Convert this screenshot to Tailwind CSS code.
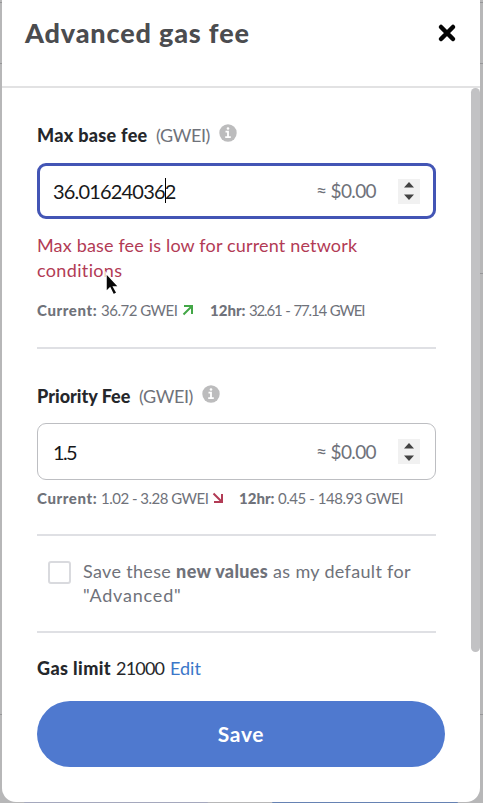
<!DOCTYPE html>
<html lang="en">
<head>
<meta charset="utf-8">
<title>Advanced gas fee</title>
<script src="https://cdn.jsdelivr.net/npm/@tailwindcss/browser@4"></script>
</head>
<body class="relative h-[803px] w-[483px] overflow-hidden bg-[#b7b7b8] font-['Lato',sans-serif] whitespace-nowrap text-[#6f727a]">
<div class="absolute inset-0">
  <div class="absolute top-[2px] h-px w-full bg-[#969698]"></div>
  <div class="absolute top-[63px] h-px w-full bg-[#969698]"></div>
  <div class="absolute top-[273px] left-[480px] h-px w-[3px] bg-[#969698]"></div>
  <div class="absolute top-[714px] h-px w-full bg-[#969698]"></div>
  <div class="absolute top-[801px] left-[24px] h-[2px] w-[184px] rounded bg-[#a5a8bd]"></div>
  <div class="absolute top-[801px] left-[272px] h-[2px] w-[186px] rounded bg-[#6682b3]"></div>
</div>
<main class="relative ml-[2px] flex h-[802px] w-[478px] flex-col rounded-b-[14px] bg-white">
  <header class="flex h-[88px] shrink-0 items-start justify-between border-b-2 border-[#e2e2e3] pr-[23px] pl-[23px]">
    <h1 class="mt-[16px] text-[27px] leading-[34px] font-black tracking-[0.84px] text-[#4b4c4f]">Advanced gas fee</h1>
    <svg class="mt-[23px]" width="20" height="20" viewBox="0 0 20 20"><path d="M4 4 16 16M16 4 4 16" stroke="#050505" stroke-width="4.5" stroke-linecap="round"/></svg>
  </header>
  <div class="flex flex-col pl-[35px]">
    <section class="flex h-[261px] w-[399px] flex-col border-b-2 border-[#dfe0e4]">
      <div class="mt-[35px] flex h-[24px] items-center text-[18px] leading-[24px]">
        <b class="w-[119px] font-black tracking-[0.3px] text-[#25272b]">Max base fee</b><span class="w-[63px] tracking-[-0.4px]">(GWEI)</span>
        <svg class="mb-1" width="18" height="18" viewBox="0 0 18 18"><circle cx="9" cy="9" r="8.7" fill="#bcbcbd"/><path d="M6.5 7.6H9V13M6.2 13.2h5.6" stroke="#fff" stroke-width="1.8" fill="none"/><circle cx="9" cy="4.5" r="1.3" fill="#fff"/></svg>
      </div>
      <div class="mt-[16px] flex h-[56px] items-center rounded-[9px] border-[3px] border-[#4355b5] pl-[13px] text-[#17181a]">
        <div class="relative w-[263px] text-[20px] leading-[30px] tracking-[-0.82px]">36.016240362<i class="absolute top-[2px] left-[112px] h-[25px] w-px bg-black"></i></div>
        <span class="w-[82px] text-[19px] tracking-[-0.65px] text-[#6f727a]">≈ $0.00</span>
        <span class="flex h-[25px] w-[22px] items-center justify-center bg-[#f1f1f1]"><svg width="10" height="18" viewBox="0 0 10 18"><path d="M0 5.5 5 0l5 5.5zM0 12.5h10L5 18z" fill="#424242"/></svg></span>
      </div>
      <p class="mt-[14px] text-[18px] leading-[25px] text-[#b23b55]"><span class="tracking-[0.17px]">Max base fee is low for current network</span><br><span class="tracking-[0.35px]">conditions</span></p>
      <div class="mt-[17px] flex h-[20px] items-center text-[15px] leading-[20px]">
        <b class="w-[64px] font-black tracking-[0.6px]">Current:</b><span class="w-[81px] tracking-[-0.5px]">36.72 GWEI</span>
        <svg width="12" height="12" viewBox="0 0 12 12"><path d="M2 2h8v8M10 2 1.5 10.5" stroke="#43a747" stroke-width="2" fill="none"/></svg>
        <b class="ml-[16px] w-[39px] font-black">12hr:</b><span class="tracking-[-1.15px] [word-spacing:1px]">32.61 - 77.14 GWEI</span>
      </div>
    </section>
    <section class="flex h-[187px] w-[399px] flex-col border-b-2 border-[#dfe0e4]">
      <div class="mt-[35px] flex h-[24px] items-center text-[18px] leading-[24px]">
        <b class="w-[102px] font-black text-[#25272b]">Priority Fee</b><span class="w-[63px] tracking-[-0.4px]">(GWEI)</span>
        <svg class="mb-1" width="18" height="18" viewBox="0 0 18 18"><circle cx="9" cy="9" r="8.7" fill="#bcbcbd"/><path d="M6.5 7.6H9V13M6.2 13.2h5.6" stroke="#fff" stroke-width="1.8" fill="none"/><circle cx="9" cy="4.5" r="1.3" fill="#fff"/></svg>
      </div>
      <div class="mt-[15px] flex h-[57px] items-center rounded-[9px] border-[1.5px] border-[#bdbec2] pl-[15px] text-[#17181a]">
        <div class="w-[263px] text-[20px] tracking-[-1.7px]">1.5</div>
        <span class="w-[82px] pt-px text-[19px] tracking-[-0.65px] text-[#6f727a]">≈ $0.00</span>
        <span class="flex h-[25px] w-[22px] items-center justify-center bg-[#f1f1f1]"><svg width="10" height="18" viewBox="0 0 10 18"><path d="M0 5.5 5 0l5 5.5zM0 12.5h10L5 18z" fill="#424242"/></svg></span>
      </div>
      <div class="mt-[8px] flex h-[20px] items-center text-[15px] leading-[20px]">
        <b class="w-[64px] font-black tracking-[0.6px]">Current:</b><span class="w-[111px] tracking-[-0.52px]">1.02 - 3.28 GWEI</span>
        <svg width="12" height="12" viewBox="0 0 12 12"><path d="M2 10h8V2M10 10 1.5 1.5" stroke="#b23b55" stroke-width="2" fill="none"/></svg>
        <b class="ml-[15px] w-[39px] font-black">12hr:</b><span class="tracking-[-0.45px]">0.45 - 148.93 GWEI</span>
      </div>
    </section>
    <label class="flex h-[97px] w-[399px] border-b-2 border-[#dfe0e4] pl-[11px]">
      <span class="mt-[25px] h-[23px] w-[23px] rounded-[3px] border-2 border-[#d9dade]"></span>
      <span class="mt-[23px] ml-[12px] text-[18px] leading-[24px]"><span class="tracking-[0.33px]">Save these <b class="font-black">new values</b> as my default for</span><br><span class="tracking-[0.8px]">"Advanced"</span></span>
    </label>
    <div class="mt-[23px] flex h-[24px] items-center text-[18px] leading-[24px] text-[#25272b]">
      <b class="w-[79px] font-black tracking-[0.4px]">Gas limit</b><span class="w-[54px] tracking-[-0.8px]">21000</span><span class="text-[#3b77c9]">Edit</span>
    </div>
    <button class="mt-[21px] h-[66px] w-[408px] rounded-full bg-[#4f79cf] text-[21px] font-bold tracking-[0.7px] text-white">Save</button>
  </div>
  <div class="absolute top-[88px] right-0 h-[564px] w-[9px] rounded-full bg-[#c2c2c4]"></div>
  <svg class="absolute top-[270px] left-[100px]" width="20" height="28" viewBox="0 0 20 28"><path d="M4 3v19l4-4 3.5 7 3.5-2-3.3-6H17z" fill="#080808" stroke="#fff" stroke-width="1.5"/></svg>
</main>
</body>
</html>
